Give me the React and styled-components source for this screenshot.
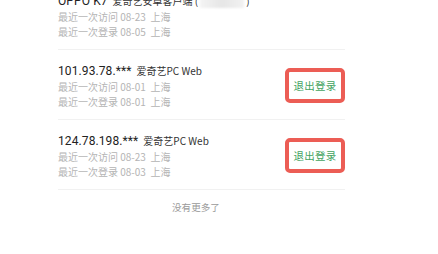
import styled, { createGlobalStyle } from "styled-components";

const GlobalStyle = createGlobalStyle`
  html, body {
    margin: 0;
    padding: 0;
    background: #ffffff;
    overflow: hidden;
  }
  body {
    font-family: Roboto, "Noto Sans CJK SC", sans-serif;
  }
`;

const Page = styled.div`
  width: 438px;
  height: 254px;
  overflow: hidden;
  background: #fff;
`;

const List = styled.div`
  margin-top: -20px;
  margin-left: 58px;
  width: 287px;
`;

const Item = styled.div`
  display: flex;
  align-items: center;
  justify-content: space-between;
  padding: 13px 0 10px;
  border-bottom: 1px solid #f1f1f1;
`;

const Info = styled.div`
  display: flex;
  flex-direction: column;
`;

const Title = styled.div`
  display: flex;
  align-items: baseline;
  gap: 5px;
  height: 16px;
  line-height: 16px;
  color: #222;
`;

const Device = styled.span`
  font-size: 12px;
  letter-spacing: 0.1px;
`;

const Client = styled.span`
  font-size: 10px;
  color: #333;
  font-family: "Noto Sans CJK SC", Roboto, sans-serif;
`;

const Blur = styled.span`
  display: inline-block;
  width: 44px;
  height: 11px;
  margin: 0 2px;
  background: linear-gradient(to right, #f4f4f4, #e6e6e6 50%, #f2f2f2);
  filter: blur(1px);
  vertical-align: middle;
`;

const Meta = styled.div`
  height: 15px;
  font-size: 10px;
  line-height: 15px;
  color: #b4b4b4;
  font-family: "Noto Sans CJK SC", Roboto, sans-serif;
  white-space: pre;
`;

const LogoutButton = styled.button`
  width: 60px;
  height: 35px;
  margin-top: -2px;
  box-sizing: border-box;
  border: 4px solid #ec5d55;
  border-radius: 5px;
  background: #fff;
  color: #43a35f;
  font-size: 10.5px;
  font-family: "Noto Sans CJK SC", sans-serif;
  padding: 0;
  letter-spacing: 0.3px;
  cursor: pointer;
`;

const Footer = styled.div`
  margin: 10px 0 0 172px;
  font-size: 9.6px;
  color: #9a9a9a;
  font-family: "Noto Sans CJK SC", sans-serif;
`;

const sessions = [
  {
    device: "OPPO K7",
    client: "爱奇艺安卓客户端",
    hidden: true,
    visit: "08-23",
    login: "08-05",
  },
  {
    device: "101.93.78.***",
    client: "爱奇艺PC Web",
    visit: "08-01",
    login: "08-01",
    logout: true,
  },
  {
    device: "124.78.198.***",
    client: "爱奇艺PC Web",
    visit: "08-23",
    login: "08-03",
    logout: true,
  },
];

export default function App() {
  return (
    <Page>
      <GlobalStyle />
      <List>
        {sessions.map((s) => (
          <Item key={s.device}>
            <Info>
              <Title>
                <Device>{s.device}</Device>
                <Client>
                  {s.client}
                  {s.hidden && (
                    <>
                      {" ("}
                      <Blur />)
                    </>
                  )}
                </Client>
              </Title>
              <Meta>{`最近一次访问 ${s.visit}  上海`}</Meta>
              <Meta>{`最近一次登录 ${s.login}  上海`}</Meta>
            </Info>
            {s.logout && <LogoutButton>退出登录</LogoutButton>}
          </Item>
        ))}
      </List>
      <Footer>没有更多了</Footer>
    </Page>
  );
}
